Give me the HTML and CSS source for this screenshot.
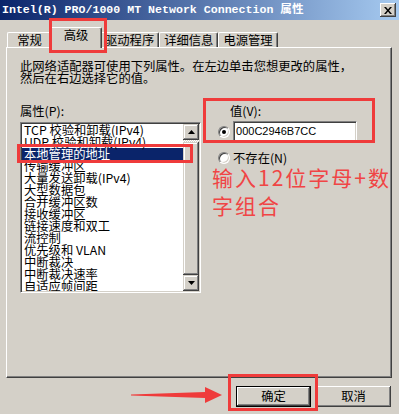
FILE: index.html
```html
<!DOCTYPE html>
<html lang="zh">
<head>
  <meta charset="UTF-8" />
  <title>Intel(R) PRO/1000 MT Network Connection 属性</title>
  <link rel="stylesheet" href="styles.css">
</head>
<body>

<div class="titlebar">
  <span class="title">Intel(R) PRO/1000 MT Network Connection 属性</span>
  <span class="close">
    <svg width="8" height="7" viewBox="0 0 8 7"><path d="M0 0h2l2 2.5 2-2.5h2l-3 3.5 3 3.5h-2l-2-2.5-2 2.5h-2l3-3.5z" fill="#000"/></svg>
  </span>
</div>

<div class="tabs">
  <div class="tab">常规</div>
  <div class="tab active">高级</div>
  <div class="tab">驱动程序</div>
  <div class="tab">详细信息</div>
  <div class="tab">电源管理</div>
</div>

<div class="panel">
  <p class="desc">此网络适配器可使用下列属性。在左边单击您想更改的属性，<br>然后在右边选择它的值。</p>

  <div class="props">
    <div class="prop-col">
      <div class="label">属性(P):</div>
      <div class="listbox">
        <ul class="items">
          <li>TCP 校验和卸载(IPv4)</li>
          <li>UDP 校验和卸载(IPv4)</li>
          <li class="selected">本地管理的地址</li>
          <li>传输缓冲区</li>
          <li>大量发送卸载(IPv4)</li>
          <li>大型数据包</li>
          <li>合并缓冲区数</li>
          <li>接收缓冲区</li>
          <li>链接速度和双工</li>
          <li>流控制</li>
          <li>优先级和 VLAN</li>
          <li>中断裁决</li>
          <li>中断裁决速率</li>
          <li>自适应帧间距</li>
        </ul>
        <div class="scrollbar">
          <div class="sb-btn">
            <svg width="7" height="4" viewBox="0 0 7 4"><path d="M3.5 0L7 4H0z" fill="#000"/></svg>
          </div>
          <div class="sb-track"><div class="sb-thumb"></div></div>
          <div class="sb-btn">
            <svg width="7" height="4" viewBox="0 0 7 4"><path d="M0 0h7L3.5 4z" fill="#000"/></svg>
          </div>
        </div>
      </div>
    </div>

    <div class="value-col">
      <div class="value-label">值(V):</div>
      <div class="val-row">
        <span class="radio checked"></span>
        <div class="textbox">000C2946B7CC</div>
      </div>
      <div class="radio-row">
        <span class="radio"></span>
        <span>不存在(N)</span>
      </div>
      <div class="note">输入12位字母+数<br>字组合</div>
    </div>
  </div>
</div>

<div class="buttons">
  <div class="btn default">确定</div>
  <div class="btn">取消</div>
</div>

<div class="mark mark-tab"></div>
<div class="mark mark-item"></div>
<div class="mark mark-value"></div>
<div class="mark mark-ok"></div>

<svg class="arrow" width="92" height="18" viewBox="0 0 92 18">
  <polygon points="0,8.6 74,6 74,1 91,9 74,17 74,12 0,9.4" fill="#ef3b3b"/>
</svg>

</body>
</html>
```

FILE: styles.css
```css
body {
  margin: 0;
  width: 399px;
  height: 414px;
  overflow: hidden;
  position: relative;
  background: #d4d0c8;
  color: #000;
  font-family: "Noto Sans CJK SC", sans-serif;
  font-size: 12.3px;
  line-height: 12px;
}

.titlebar {
  height: 20px;
  display: flex;
  align-items: center;
  padding: 0 3px 0 2px;
  background: linear-gradient(90deg, #0a246a 0%, #a6caf0 100%);
}

.title {
  color: white;
  font-family: "Liberation Mono", "Noto Sans CJK SC", monospace;
  font-weight: bold;
  font-size: 11.6px;
  line-height: 20px;
  white-space: nowrap;
}

.close {
  margin-left: auto;
  width: 16px;
  height: 14px;
  display: flex;
  align-items: center;
  justify-content: center;
  background: #d4d0c8;
  box-shadow: inset -1px -1px #404040, inset 1px 1px #fff, inset -2px -2px #808080;
}

/* tabs */
.tabs {
  display: flex;
  align-items: flex-end;
  height: 20px;
  margin: 7px 0 0 7px;
  position: relative;
  z-index: 2;
}

.tab {
  height: 15px;
  min-width: 45px;
  padding: 0 4px;
  box-sizing: border-box;
  text-align: center;
  line-height: 14px;
  white-space: nowrap;
  border-top: 1px solid #fff;
  border-left: 1px solid #fff;
  border-right: 1px solid #404040;
  border-radius: 2px 2px 0 0;
  box-shadow: inset -1px 0 #808080;
}

.tab.active {
  height: 21px;
  min-width: 52px;
  margin: 0 -2px -1px -2px;
  padding-bottom: 3px;
  background: #d4d0c8;
  position: relative;
  z-index: 3;
}

.panel {
  margin-left: 6px;
  width: 386px;
  height: 331px;
  box-sizing: border-box;
  padding: 13px 0 0 13px;
  border-top: 1px solid #fff;
  border-left: 1px solid #fff;
  border-right: 1px solid #404040;
  border-bottom: 1px solid #404040;
  box-shadow: inset -1px -1px #808080;
  position: relative;
  z-index: 1;
}

.desc {
  margin: 0;
  line-height: 11.5px;
  white-space: nowrap;
}

.props {
  display: flex;
  margin-top: 21px;
}

.prop-col {
  width: 187px;
}

.label {
  height: 12px;
}

.listbox {
  margin-top: 5px;
  height: 171px;
  box-sizing: border-box;
  display: flex;
  padding: 1px;
  background: white;
  border: 1px solid;
  border-color: #808080 #fff #fff #808080;
  box-shadow: inset 1px 1px #404040, inset -1px -1px #d4d0c8;
}

.items {
  flex: 1;
  list-style: none;
  margin: 0;
  padding: 0;
  overflow: hidden;
}

.items li {
  height: 12px;
  line-height: 12px;
  padding-left: 2px;
  white-space: nowrap;
}

.items li.selected {
  background: #0a246a;
  color: white;
}

.scrollbar {
  width: 16px;
  display: flex;
  flex-direction: column;
}

.sb-btn {
  height: 16px;
  display: flex;
  align-items: center;
  justify-content: center;
  background: #d4d0c8;
  box-shadow: inset -1px -1px #404040, inset 1px 1px #d4d0c8, inset -2px -2px #808080, inset 2px 2px #fff;
}

.sb-track {
  flex: 1;
  display: flex;
  padding-top: 2px;
  background: repeating-conic-gradient(#fff 0 25%, #d4d0c8 0 50%) 0 0 / 2px 2px;
}

.sb-thumb {
  flex: 1;
  background: #d4d0c8;
  box-shadow: inset -1px -1px #404040, inset 1px 1px #d4d0c8, inset -2px -2px #808080, inset 2px 2px #fff;
}

/* value side */
.value-col {
  margin-left: 11px;
}

.value-label {
  height: 12px;
  padding-left: 18px;
}

.val-row {
  display: flex;
  align-items: center;
  margin-top: 4px;
  height: 21px;
}

.radio {
  width: 12px;
  height: 12px;
  box-sizing: border-box;
  margin: 0 3px 0 6px;
  border-radius: 50%;
  background: white;
  border: 1px solid;
  border-color: #808080 #fff #fff #808080;
  box-shadow: inset 1px 1px #404040, inset -1px -1px #d4d0c8;
  position: relative;
  flex-shrink: 0;
}

.radio.checked::after {
  content: "";
  position: absolute;
  left: 3px;
  top: 3px;
  width: 4px;
  height: 4px;
  border-radius: 50%;
  background: #000;
}

.textbox {
  width: 124px;
  height: 21px;
  box-sizing: border-box;
  padding-left: 2px;
  background: white;
  border: 1px solid;
  border-color: #808080 #fff #fff #808080;
  box-shadow: inset 1px 1px #404040, inset -1px -1px #d4d0c8;
  font-family: "Liberation Sans", sans-serif;
  font-size: 11px;
  line-height: 19px;
}

.radio-row {
  display: flex;
  align-items: center;
  margin-top: 10px;
  height: 12px;
}

.note {
  margin-top: -1px;
  color: #f04545;
  font-size: 21px;
  line-height: 28px;
  letter-spacing: 2px;
  white-space: nowrap;
}

/* buttons */
.buttons {
  display: flex;
  justify-content: flex-end;
  gap: 5px;
  padding: 8px 8px 0 0;
}

.btn {
  width: 75px;
  height: 21px;
  box-sizing: border-box;
  text-align: center;
  line-height: 20px;
  background: #d4d0c8;
  box-shadow: inset -1px -1px #404040, inset 1px 1px #fff, inset -2px -2px #808080;
}

.btn.default {
  border: 1px solid #000;
  line-height: 18px;
}

/* annotations */
.mark {
  position: absolute;
  box-sizing: border-box;
  border: 3px solid #ef3b3b;
  z-index: 5;
}

.mark-tab { left: 49px; top: 18px; width: 58px; height: 35px; }
.mark-item { left: 17px; top: 144px; width: 176px; height: 19px; }
.mark-value { left: 203px; top: 98px; width: 172px; height: 45px; }
.mark-ok { left: 228px; top: 374px; width: 90px; height: 37px; }

.arrow {
  position: absolute;
  left: 131px;
  top: 386px;
  z-index: 5;
}
```
